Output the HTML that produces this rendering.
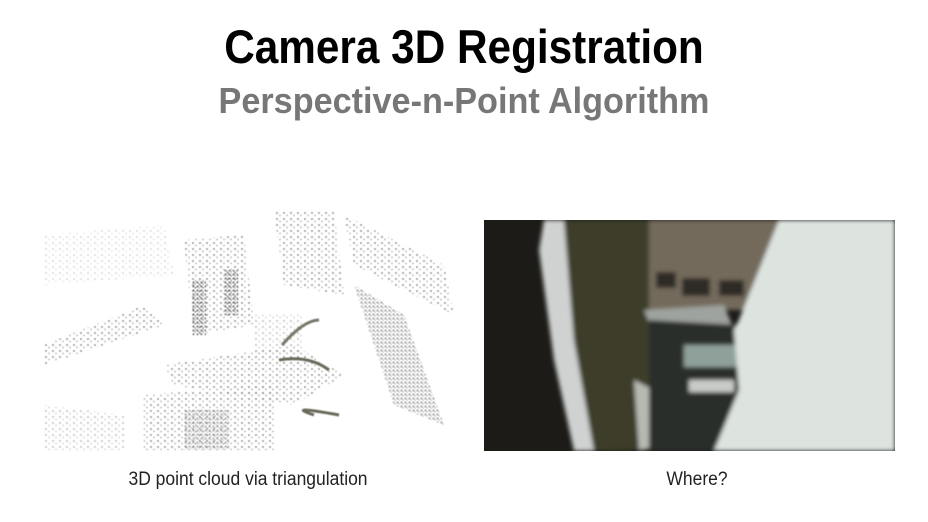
<!DOCTYPE html>
<html><head><style>
body{margin:0;width:928px;height:522px;background:#fff;overflow:hidden;position:relative;font-family:"Liberation Sans",sans-serif}
.t{position:absolute;left:0;width:928px;text-align:center;font-weight:bold;white-space:nowrap}
.c{position:absolute;font-size:19px;color:#222;white-space:nowrap;transform:translateX(-50%) scaleX(0.92)}
</style></head><body>
<div class="t" style="top:19px;font-size:47px;line-height:56px;color:#000;transform:scaleX(0.9)">Camera 3D Registration</div>
<div class="t" style="top:80px;font-size:36px;line-height:42px;color:#777;transform:scaleX(0.95)">Perspective-n-Point Algorithm</div>

<svg style="position:absolute;left:44px;top:205px" width="412" height="250">
<defs>
<pattern id="d" width="7" height="6" patternUnits="userSpaceOnUse"><circle cx="2" cy="2" r="0.9" fill="#555"/><circle cx="5" cy="4.5" r="0.7" fill="#777"/></pattern>
<pattern id="d2" width="4" height="4" patternUnits="userSpaceOnUse"><circle cx="1.5" cy="1.5" r="1" fill="#333"/><circle cx="3.2" cy="3" r="0.7" fill="#666"/></pattern>
<filter id="b"><feGaussianBlur stdDeviation="0.4"/></filter>
</defs>
<g filter="url(#b)" opacity="0.8">
<polygon points="0,140 100,100 120,120 0,160" fill="url(#d)"/>
<polygon points="230,5 290,5 300,90 240,80" fill="url(#d)"/>
<polygon points="300,10 400,60 410,110 310,60" fill="url(#d)"/>
<polygon points="310,80 360,110 400,220 350,200" fill="url(#d2)" opacity="0.7"/>
<polygon points="140,35 200,30 210,120 150,130" fill="url(#d)"/>
<rect x="148" y="75" width="14" height="55" fill="url(#d2)"/>
<rect x="180" y="65" width="14" height="45" fill="url(#d2)"/>
<polygon points="120,160 250,140 300,170 250,200 130,180" fill="url(#d)"/>
<polygon points="100,190 230,180 230,245 100,245" fill="url(#d)"/>
<rect x="140" y="205" width="45" height="40" fill="url(#d2)" opacity="0.6"/>
<polygon points="0,200 80,210 80,245 0,245" fill="url(#d)" opacity="0.6"/>
<polygon points="210,110 260,110 260,150 210,150" fill="url(#d)" opacity="0.6"/>
<path d="M238,140 Q260,115 275,115" stroke="#554" stroke-width="3" fill="none"/>
<path d="M235,155 Q265,150 285,165 M270,210 Q240,200 295,210" stroke="#443" stroke-width="3" fill="none"/>
<polygon points="0,30 120,20 130,70 0,80" fill="url(#d)" opacity="0.35"/>
</g>
</svg>

<svg style="position:absolute;left:484px;top:220px" width="411" height="231">
<defs><filter id="bl"><feGaussianBlur stdDeviation="2"/></filter></defs>
<rect width="411" height="231" fill="#1c1b18"/>
<g filter="url(#bl)">
<polygon points="60,0 80,0 90,120 110,231 90,231 70,140 55,30" fill="#cfd2d0"/>
<polygon points="80,0 170,0 180,230 110,231 90,120" fill="#3e3c2c"/>
<polygon points="150,160 170,170 175,225 155,231" fill="#d6d8d6" opacity="0.8"/>
<polygon points="165,0 300,0 260,90 165,90" fill="#736a5c"/>
<rect x="198" y="58" width="28" height="18" fill="#2d2a26"/>
<rect x="172" y="52" width="20" height="16" fill="#2d2a26"/>
<rect x="235" y="60" width="25" height="16" fill="#2d2a26"/>
<polygon points="160,90 240,85 250,110 170,115" fill="#9fa39f"/>
<polygon points="165,100 255,105 255,231 165,231" fill="#2a2f2b"/>
<rect x="200" y="125" width="55" height="22" fill="#8fa09a"/>
<rect x="205" y="160" width="45" height="12" fill="#c9ccc8"/>
<polygon points="295,0 411,0 411,231 230,231 255,170 250,110 255,100" fill="#dde4e0"/>
</g>
</svg>

<div class="c" style="left:248px;top:469px">3D point cloud via triangulation</div>
<div class="c" style="left:697px;top:469px">Where?</div>
</body></html>
